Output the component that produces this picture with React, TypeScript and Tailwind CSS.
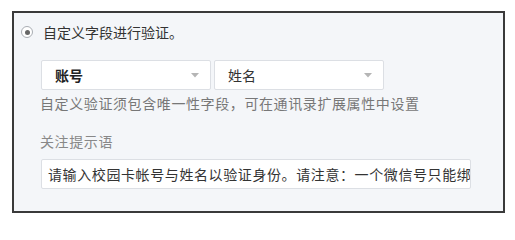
const Arrow = () => (
  <svg width="8" height="5" viewBox="0 0 8 5" className="shrink-0">
    <path d="M0 0 L8 0 L4 4.5 Z" fill="#b5b5b5" />
  </svg>
);

const Select: React.FC<{ value: string; bold?: boolean }> = ({ value, bold }) => (
  <div className="flex h-[30px] w-[170px] items-center justify-between rounded-[2px] border border-[#dcdfe4] bg-white pl-[13px] pr-[11px]">
    <span className={bold ? "font-bold text-[#222]" : "text-[#333]"}>{value}</span>
    <Arrow />
  </div>
);

export default function App() {
  return (
    <div
      className="h-[219px] w-[515px] bg-white pl-[12px] pt-[11px] text-[14px] leading-[20px]"
      style={{ fontFamily: '"Noto Sans CJK SC", "Noto Sans", sans-serif' }}
    >
      <div className="h-[202px] w-[493px] border-2 border-[#3a3a3a] bg-[#f4f6f9] pt-[9px]">
        <div className="flex items-center pl-[7px]">
          <span className="flex h-[12px] w-[12px] items-center justify-center rounded-full border border-[#a9adb3] bg-white">
            <span className="h-[5px] w-[5px] rounded-full bg-[#666]" />
          </span>
          <span className="ml-[10px] text-[#333]">自定义字段进行验证。</span>
        </div>

        <div className="pl-[27px]">
          <div className="mt-[18px] flex gap-[3px]">
            <Select value="账号" bold />
            <Select value="姓名" />
          </div>
          <div className="mt-[3px] -ml-[1px] text-[#777] tracking-[0.6px]">
            自定义验证须包含唯一性字段，可在通讯录扩展属性中设置
          </div>
          <div className="mt-[18px] -ml-[1px] text-[#888] tracking-[0.6px]">关注提示语</div>
          <div className="mt-[8px] flex h-[30px] w-[430px] items-center overflow-hidden whitespace-nowrap rounded-[2px] border border-[#dcdfe4] bg-white pl-[6px] text-[#333] tracking-[0.6px]">
            请输入校园卡帐号与姓名以验证身份。请注意：一个微信号只能绑定一个校园卡帐号
          </div>
        </div>
      </div>
    </div>
  );
}
